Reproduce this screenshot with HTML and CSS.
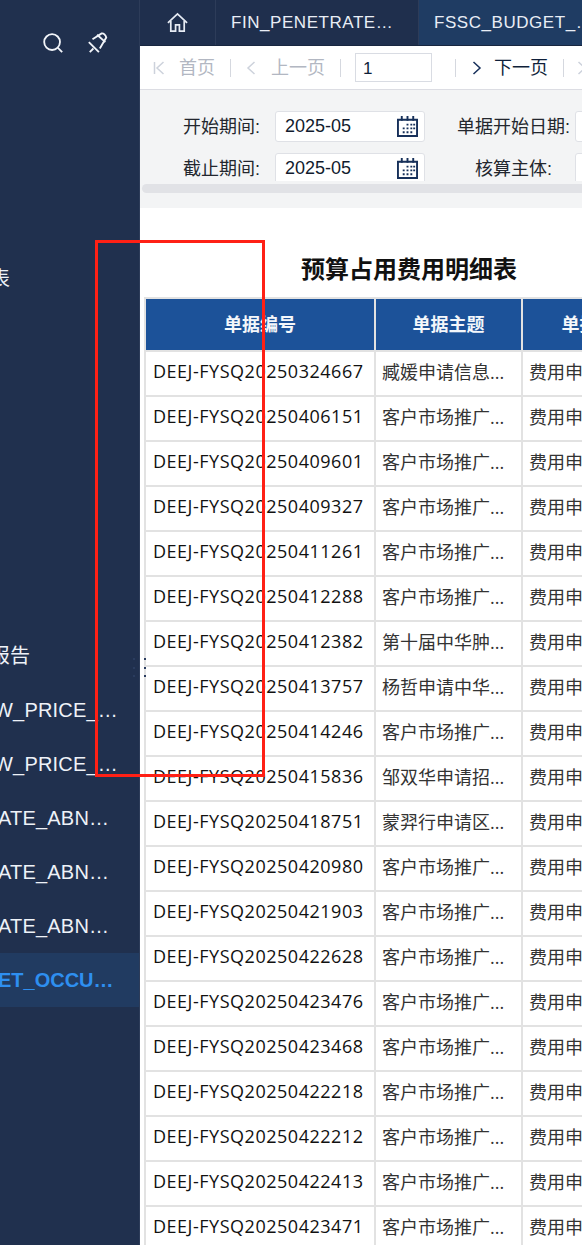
FILE: index.html
```html
<!DOCTYPE html>
<html lang="zh">
<head>
<meta charset="utf-8">
<title>预算占用费用明细表</title>
<link rel="stylesheet" href="styles.css">
</head>
<body>
<aside class="sidebar">
  <div class="side-tools">
    <svg class="side-icon" viewBox="0 0 24 24"><circle cx="11" cy="11" r="8.6"/><path d="M17.4 17.4L22 22"/></svg>
    <svg class="side-icon" viewBox="0 0 24 24"><path d="M2 11L13 22"/><path d="M6 8L16 1.5C18 1 20.5 3.5 21 6L14 18"/><path d="M11 3L20 11"/><path d="M3 22L7 18"/></svg>
  </div>
  <ul class="menu">
    <li class="menu-item clip-cjk spaced">表</li>
    <li class="menu-item clip-cjk">报告</li>
    <li class="menu-item clip-w">W_PRICE_…</li>
    <li class="menu-item clip-w">W_PRICE_…</li>
    <li class="menu-item clip-a">ATE_ABN…</li>
    <li class="menu-item clip-a">ATE_ABN…</li>
    <li class="menu-item clip-a">ATE_ABN…</li>
    <li class="menu-item clip-e active">ET_OCCU…</li>
  </ul>
</aside>
<main class="main">
  <nav class="tabs">
    <div class="tab tab-home">
      <svg class="home-icon" viewBox="0 0 24 24"><path d="M2 12.5L12 3L22 12.5"/><path d="M5 10.5V21H10V14.5H14V21H19V10.5"/></svg>
    </div>
    <div class="tab tab-a">FIN_PENETRATE…</div>
    <div class="tab tab-b">FSSC_BUDGET_…</div>
  </nav>
  <div class="toolbar">
    <svg class="pg-icon first muted" viewBox="0 0 12 16"><path d="M1.5 2V14M10.5 2L4 8L10.5 14"/></svg>
    <span class="pg-text muted">首页</span>
    <span class="sep"></span>
    <svg class="pg-icon muted" viewBox="0 0 12 16"><path d="M9.5 2L3 8L9.5 14"/></svg>
    <span class="pg-text muted">上一页</span>
    <span class="sep"></span>
    <div class="page-input">1</div>
    <span class="sep"></span>
    <svg class="pg-icon next" viewBox="0 0 12 16"><path d="M2.5 2L9 8L2.5 14"/></svg>
    <span class="pg-text">下一页</span>
    <span class="sep sep-last"></span>
    <svg class="pg-icon muted" viewBox="0 0 12 16"><path d="M2.5 2L9 8L2.5 14"/></svg>
  </div>
  <section class="filters">
    <div class="filter-grid">
      <label class="f-label">开始期间:</label>
      <div class="f-input">2025-05
        <svg class="cal" viewBox="0 0 22 22"><path class="cal-frame" d="M1 4H21V21H1Z"/><path class="cal-frame" d="M5 0V5M11 0V5M17 0V5"/><path class="cal-dots" d="M10 8h2v2h-2zM14 8h2v2h-2zM17 8h2v2h-2zM6 12h2v2H6zM10 12h2v2h-2zM14 12h2v2h-2zM17 12h2v2h-2zM6 16h2v2H6zM10 16h2v2h-2zM14 16h2v2h-2z"/></svg>
      </div>
      <label class="f-label wide">单据开始日期:</label>
      <div class="f-input"></div>
      <label class="f-label">截止期间:</label>
      <div class="f-input">2025-05
        <svg class="cal" viewBox="0 0 22 22"><path class="cal-frame" d="M1 4H21V21H1Z"/><path class="cal-frame" d="M5 0V5M11 0V5M17 0V5"/><path class="cal-dots" d="M10 8h2v2h-2zM14 8h2v2h-2zM17 8h2v2h-2zM6 12h2v2H6zM10 12h2v2h-2zM14 12h2v2h-2zM17 12h2v2h-2zM6 16h2v2H6zM10 16h2v2h-2zM14 16h2v2h-2z"/></svg>
      </div>
      <label class="f-label mid">核算主体:</label>
      <div class="f-input"></div>
    </div>
    <div class="hscroll"></div>
  </section>
  <section class="report">
    <h1 class="report-title">预算占用费用明细表</h1>
    <table class="grid">
      <colgroup><col class="c1"><col class="c2"><col class="c3"></colgroup>
      <thead><tr><th>单据编号</th><th>单据主题</th><th>单据类型</th></tr></thead>
      <tbody>
        <tr><td>DEEJ-FYSQ20250324667</td><td>臧媛申请信息...</td><td>费用申请单</td></tr>
        <tr><td>DEEJ-FYSQ20250406151</td><td>客户市场推广...</td><td>费用申请单</td></tr>
        <tr><td>DEEJ-FYSQ20250409601</td><td>客户市场推广...</td><td>费用申请单</td></tr>
        <tr><td>DEEJ-FYSQ20250409327</td><td>客户市场推广...</td><td>费用申请单</td></tr>
        <tr><td>DEEJ-FYSQ20250411261</td><td>客户市场推广...</td><td>费用申请单</td></tr>
        <tr><td>DEEJ-FYSQ20250412288</td><td>客户市场推广...</td><td>费用申请单</td></tr>
        <tr><td>DEEJ-FYSQ20250412382</td><td>第十届中华肿...</td><td>费用申请单</td></tr>
        <tr><td>DEEJ-FYSQ20250413757</td><td>杨哲申请中华...</td><td>费用申请单</td></tr>
        <tr><td>DEEJ-FYSQ20250414246</td><td>客户市场推广...</td><td>费用申请单</td></tr>
        <tr><td>DEEJ-FYSQ20250415836</td><td>邹双华申请招...</td><td>费用申请单</td></tr>
        <tr><td>DEEJ-FYSQ20250418751</td><td>蒙羿行申请区...</td><td>费用申请单</td></tr>
        <tr><td>DEEJ-FYSQ20250420980</td><td>客户市场推广...</td><td>费用申请单</td></tr>
        <tr><td>DEEJ-FYSQ20250421903</td><td>客户市场推广...</td><td>费用申请单</td></tr>
        <tr><td>DEEJ-FYSQ20250422628</td><td>客户市场推广...</td><td>费用申请单</td></tr>
        <tr><td>DEEJ-FYSQ20250423476</td><td>客户市场推广...</td><td>费用申请单</td></tr>
        <tr><td>DEEJ-FYSQ20250423468</td><td>客户市场推广...</td><td>费用申请单</td></tr>
        <tr><td>DEEJ-FYSQ20250422218</td><td>客户市场推广...</td><td>费用申请单</td></tr>
        <tr><td>DEEJ-FYSQ20250422212</td><td>客户市场推广...</td><td>费用申请单</td></tr>
        <tr><td>DEEJ-FYSQ20250422413</td><td>客户市场推广...</td><td>费用申请单</td></tr>
        <tr><td>DEEJ-FYSQ20250423471</td><td>客户市场推广...</td><td>费用申请单</td></tr>
      </tbody>
    </table>
  </section>
</main>
<div class="resize-handle"><i></i><i></i><i></i><i></i><i></i><i></i></div>
<div class="annotation"></div>
</body>
</html>
```

FILE: styles.css
```css
* { box-sizing: border-box; }
html, body { margin: 0; height: 1245px; overflow: hidden; }
body {
  display: flex;
  position: relative;
  font-family: "Liberation Sans", "Noto Sans CJK SC", sans-serif;
  background: #fff;
}

/* sidebar */
.sidebar {
  width: 140px;
  flex: none;
  background: #20304e;
  border-right: 1px solid #2d3c59;
  color: #eef2f8;
  overflow: hidden;
}
.side-tools {
  display: flex;
  justify-content: flex-end;
  gap: 23px;
  padding: 32px 30px 0 0;
}
.side-icon {
  width: 22px;
  height: 22px;
  fill: none;
  stroke: #f2f5fa;
  stroke-width: 2;
}
.menu { list-style: none; margin: 198px 0 0; padding: 0; }
.menu-item {
  height: 54px;
  line-height: 54px;
  font-size: 20px;
  white-space: nowrap;
  letter-spacing: .2px;
}
.spaced { margin-bottom: 323px; }
.menu-item.clip-cjk:first-child { margin-left: -10px; }
.menu-item.clip-cjk:nth-child(2) { margin-left: -10px; letter-spacing: 0; }
.clip-w { margin-left: -6px; }
.clip-a { margin-left: -2px; }
.active {
  background: #213b61;
  color: #2e8ff0;
  font-weight: 700;
  text-indent: -2px;
  letter-spacing: 0;
}

/* main column */
.main { flex: 1; min-width: 0; display: flex; flex-direction: column; overflow: hidden; }
.tabs {
  display: flex;
  height: 46px;
  flex: none;
  background: #1f2f4d;
  border-bottom: 1px solid #18263f;
  color: #e9eef6;
  font-size: 17px;
  letter-spacing: .55px;
}
.tab { display: flex; align-items: center; white-space: nowrap; border-right: 1px solid #2d3c59; }
.tab-home { width: 76px; justify-content: center; }
.tab-a { width: 203px; padding-left: 15px; }
.tab-b { flex: 1; padding-left: 15px; background: #1f3c63; border-right: 0; overflow: hidden; }
.home-icon { width: 23px; height: 23px; fill: none; stroke: #e6ebf3; stroke-width: 1.8; }

/* toolbar */
.toolbar {
  display: flex;
  align-items: center;
  height: 44px;
  flex: none;
  padding-left: 13px;
  background: #fff;
  border-bottom: 1px solid #dcdde3;
  color: #0f1f3a;
  font-size: 18px;
  white-space: nowrap;
}
.pg-icon { width: 12px; height: 16px; flex: none; fill: none; stroke: #17305a; stroke-width: 1.5; }
.pg-icon.muted { stroke: #cdd2dc; }
.pg-text { margin-left: 14px; padding-bottom: 3px; }
.pg-icon.next + .pg-text { margin-left: 11px; }
.pg-text.muted { color: #b2b7c2; }
.sep { width: 1px; height: 18px; flex: none; background: #d5d8df; margin: 0 14px 0 15px; }
.sep-last { margin-right: 12px; }
.page-input {
  width: 77px;
  height: 29px;
  flex: none;
  line-height: 30px;
  padding-left: 7px;
  border: 1px solid #d9dce3;
  font-size: 17px;
}
.toolbar .page-input + .sep { margin-left: 23px; margin-right: 15px; }

/* filters */
.filters { height: 118px; flex: none; background: #f3f4f5; padding-top: 21px; }
.filter-grid {
  display: grid;
  grid-template-columns: 135px 150px 150px 150px;
  grid-auto-rows: 31px;
  row-gap: 11px;
  height: 70px;
  overflow: hidden;
  color: #23272e;
  font-size: 18px;
}
.f-label { display: flex; align-items: center; justify-content: flex-end; padding: 0 15px 4px 0; white-space: nowrap; }
.f-label.wide { padding-right: 5px; }
.f-label.mid { padding-right: 23px; }
.f-input {
  position: relative;
  display: flex;
  align-items: center;
  padding-left: 9px;
  background: #fff;
  border: 1px solid #dfe1e6;
  border-radius: 3px;
  font-size: 18px;
  color: #111b2e;
}
.cal { position: absolute; right: 6px; top: 4px; width: 21px; height: 21px; }
.cal-frame { fill: none; stroke: #17305a; stroke-width: 2; }
.cal-dots { fill: #17305a; }
.hscroll { height: 9px; margin: 3px 0 0 2px; background: #e1e2e6; border-radius: 5px 0 0 5px; }

/* report */
.report { flex: 1; background: #fff; padding-left: 4px; }
.report-title {
  width: 530px;
  margin: 0;
  padding-top: 44px;
  height: 89px;
  line-height: 32px;
  text-align: center;
  font-size: 24px;
  font-weight: 700;
  color: #111;
  font-family: "Noto Sans CJK SC", sans-serif;
}
.grid {
  table-layout: fixed;
  width: 528px;
  border-collapse: collapse;
  font-family: "Open Sans", "Noto Sans CJK SC", sans-serif;
  color: #111;
}
.c1 { width: 230px; }
.c2 { width: 147px; }
.c3 { width: 151px; }
.grid th, .grid td { border: 2px solid #e2e2e2; white-space: nowrap; overflow: hidden; }
.grid th {
  height: 53px;
  padding: 0 8px 3px;
  background: #1c5299;
  color: #f4f7fb;
  font-family: "Noto Sans CJK SC", sans-serif;
  font-size: 18px;
  font-weight: 700;
  text-align: center;
}
.grid td { height: 45px; padding: 0 7px 5px; font-size: 18px; letter-spacing: .52px; }
.grid td + td { padding-left: 6px; letter-spacing: 0; color: #333; }

/* overlays */
.resize-handle {
  position: absolute;
  left: 133px;
  top: 658px;
  width: 13px;
  display: grid;
  grid-template-columns: 2px 2px;
  justify-content: space-between;
  row-gap: 6.5px;
}
.resize-handle i { width: 2px; height: 2px; background: #2a3c5e; }
.annotation {
  position: absolute;
  left: 95px;
  top: 240px;
  width: 170px;
  height: 537px;
  border: 3px solid #ff2015;
}
```
